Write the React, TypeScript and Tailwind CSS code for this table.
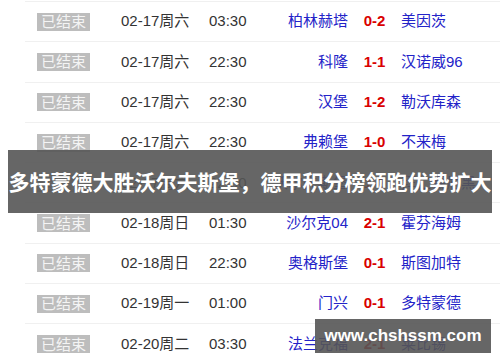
const matches = [
  { date: '02-17周六', time: '03:30', home: '柏林赫塔', score: '0-2', away: '美因茨' },
  { date: '02-17周六', time: '22:30', home: '科隆', score: '1-1', away: '汉诺威96' },
  { date: '02-17周六', time: '22:30', home: '汉堡', score: '1-2', away: '勒沃库森' },
  { date: '02-17周六', time: '22:30', home: '弗赖堡', score: '1-0', away: '不来梅' },
  { date: '02-17周六', time: '22:30', home: '沃尔夫斯堡', score: '1-2', away: '拜仁慕尼黑' },
  { date: '02-18周日', time: '01:30', home: '沙尔克04', score: '2-1', away: '霍芬海姆' },
  { date: '02-18周日', time: '22:30', home: '奥格斯堡', score: '0-1', away: '斯图加特' },
  { date: '02-19周一', time: '01:00', home: '门兴', score: '0-1', away: '多特蒙德' },
  { date: '02-20周二', time: '03:30', home: '法兰克福', score: '2-1', away: '莱比锡' },
]

const App = () => {
  return (
    <div className="relative w-[500px] h-[362px] overflow-hidden bg-white font-['Liberation_Sans','Noto_Sans_CJK_SC',sans-serif] text-[15px]">
      <div className="pt-[1px] pl-[25px]">
        {matches.map((m, i) => (
          <div key={i} className="flex items-center h-[40.3px] border-t border-[#f0f0f0]">
            <div className="ml-[12px] w-[53px] h-[18px] flex items-center justify-center bg-[#bdbdbd] text-[#f4f4f4] leading-none">
              已结束
            </div>
            <div className="ml-[31px] w-[88px] text-[#333]">{m.date}</div>
            <div className="w-[40px] text-[#333]">{m.time}</div>
            <div className="w-[99px] text-right text-[#2323c8]">{m.home}</div>
            <div className="w-[53px] text-center font-bold text-[#d90000]">{m.score}</div>
            <div className="text-[#2323c8]">{m.away}</div>
          </div>
        ))}
      </div>

      <div className="absolute left-[8px] top-[150px] w-[484px] h-[63px] flex items-center justify-center bg-[#555]/90">
        <span className="whitespace-nowrap text-[21px] font-bold text-white font-['Noto_Sans_CJK_SC',sans-serif]">
          多特蒙德大胜沃尔夫斯堡，德甲积分榜领跑优势扩大
        </span>
      </div>

      <div className="absolute left-[315px] top-[319px] w-[176px] h-[34px] flex items-center justify-center bg-[#555]/90">
        <span className="text-[17px] font-bold text-white">www.chshssm.com</span>
      </div>
    </div>
  )
}

export default App
